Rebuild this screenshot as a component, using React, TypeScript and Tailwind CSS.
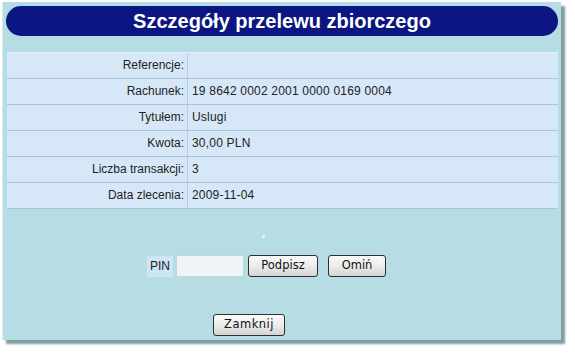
import React from 'react';

const rows: [string, string][] = [
  ['Referencje:', ''],
  ['Rachunek:', '19 8642 0002 2001 0000 0169 0004'],
  ['Tytułem:', 'Uslugi'],
  ['Kwota:', '30,00 PLN'],
  ['Liczba transakcji:', '3'],
  ['Data zlecenia:', '2009-11-04'],
];

function Btn({ label, className }: { label: string; className: string }) {
  return (
    <button
      className={`h-[22px] rounded-[3px] border border-[#2e2e2e] bg-gradient-to-b from-[#fafafa] via-[#ececec] to-[#d4d4d4] text-[11.5px] text-[#111] font-['DejaVu_Sans',sans-serif] ${className}`}
    >
      {label}
    </button>
  );
}

export default function App() {
  return (
    <div className="w-[575px] h-[355px] bg-white p-[2px] font-['Liberation_Sans',Arial,sans-serif]">
      <div className="w-[559px] h-[338px] bg-[#b6dce4] border-l border-[#d6eef2] shadow-[4px_4px_2px_#7f9ca1] pt-[4px]">
        {/* Title */}
        <div className="ml-[3px] w-[552px] h-[30px] rounded-full bg-[#0b1682] flex items-center justify-center">
          <h1 className="text-white text-[20px] font-bold">Szczegóły przelewu zbiorczego</h1>
        </div>

        {/* Details table */}
        <div className="ml-[4px] mt-[16px] w-[551px] border-t border-[#e3f0fb]">
          {rows.map(([label, value]) => (
            <div key={label} className="flex h-[26px] bg-[#d6e8f8] border-b border-[#a9c5d9] text-[12px] text-[#222]">
              <div className="w-[181px] pr-[3px] text-right leading-[25px] border-r border-[#b5cde0]">{label}</div>
              <div className="pl-[4px] leading-[25px] tracking-[0.2px]">{value}</div>
            </div>
          ))}
        </div>

        <div className="ml-[259px] mt-[26px] w-[3px] h-[3px] bg-[#e4f3f6]" />

        {/* PIN */}
        <div className="flex items-center mt-[17px] ml-[144px] h-[22px]">
          <div className="w-[26px] h-[21px] bg-[#cfe4f4] text-[12px] text-[#222] leading-[21px] text-center">PIN</div>
          <input className="ml-[3px] w-[68px] h-[22px] bg-[#eef4f8] border border-[#c5d3dc] rounded-[2px] outline-none" />
          <Btn label="Podpisz" className="ml-[4px] w-[70px]" />
          <Btn label="Omiń" className="ml-[10px] w-[58px]" />
        </div>

        {/* Close */}
        <div className="mt-[34px] ml-[210px]">
          <Btn label="Zamknij" className="w-[72px] h-[20px] tracking-[0.5px]" />
        </div>
      </div>
    </div>
  );
}
